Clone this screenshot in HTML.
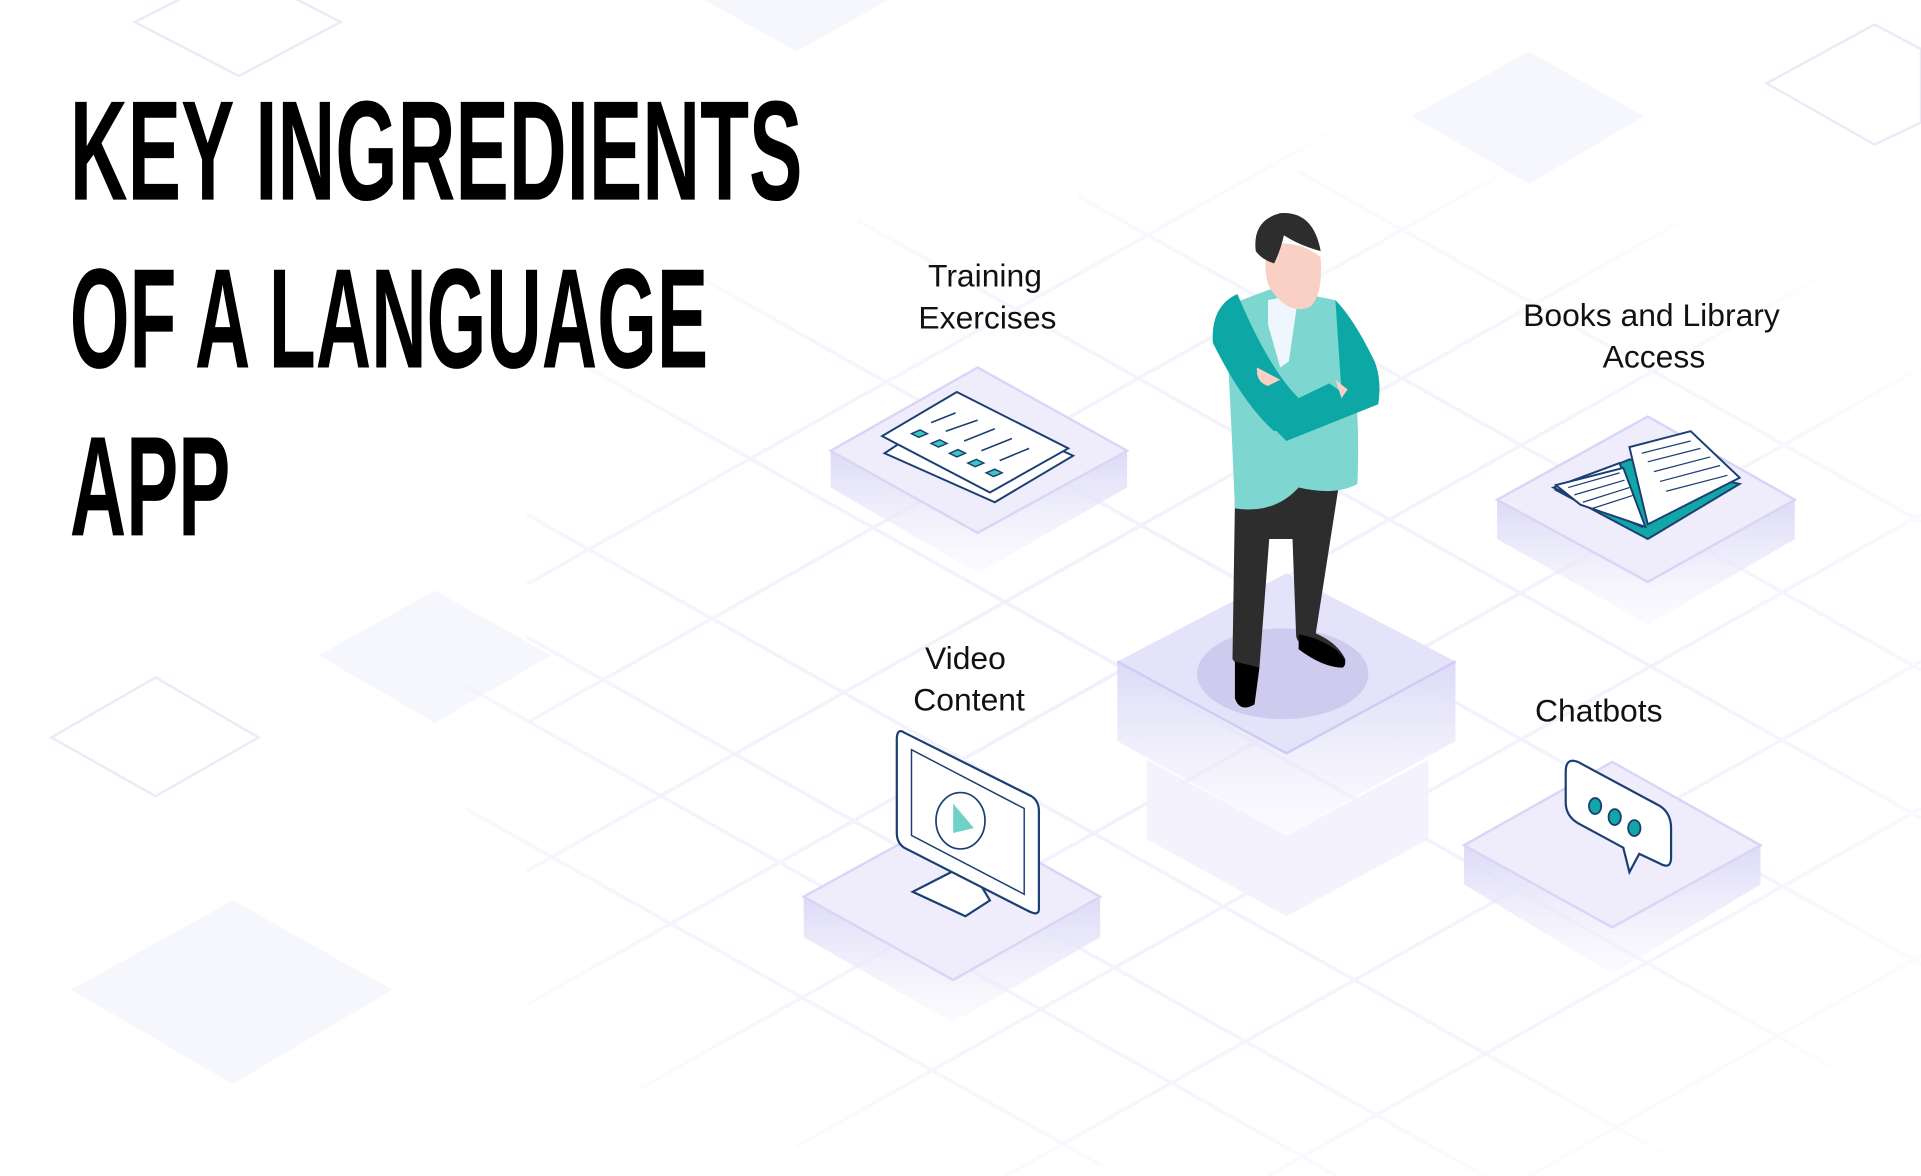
<!DOCTYPE html>
<html><head><meta charset="utf-8"><style>
html,body{margin:0;padding:0;background:#fff;overflow:hidden;width:1921px;height:1176px;}
svg{display:block;}
</style></head><body>
<svg width="1921" height="1176" viewBox="0 0 1568 960" preserveAspectRatio="none" xmlns="http://www.w3.org/2000/svg">
<defs>
<radialGradient id="fade" cx="0.62" cy="0.58" r="0.5">
<stop offset="0" stop-color="#fff" stop-opacity="1"/>
<stop offset="0.7" stop-color="#fff" stop-opacity="0.6"/>
<stop offset="1" stop-color="#fff" stop-opacity="0"/>
</radialGradient>
<mask id="m"><rect width="1568" height="960" fill="url(#fade)"/></mask>
<linearGradient id="side" x1="0" y1="0" x2="0" y2="1">
<stop offset="0" stop-color="#dcdaf7"/><stop offset="1" stop-color="#f3f2fd" stop-opacity="0.3"/>
</linearGradient>
</defs>
<rect width="1568" height="960" fill="#fff"/>
<path d="M110 18 L195 -25 L278 18 L195 62 Z" fill="none" stroke="#ebebf8" stroke-width="2"/>
<path d="M42 602 L127 553 L211 602 L127 650 Z" fill="none" stroke="#ebebf8" stroke-width="2"/>
<path d="M1442 68 L1530 20 L1568 40 L1568 100 L1530 118 Z" fill="none" stroke="#ebebf8" stroke-width="2"/>
<path d="M260 535 L355 482 L450 535 L355 590 Z" fill="#f6f6fd"/>
<path d="M58 808 L190 735 L320 808 L190 885 Z" fill="#f6f6fd"/>
<path d="M1152 95 L1248 42 L1342 95 L1248 150 Z" fill="#f6f6fd"/>
<path d="M575 0 L650 42 L725 0 Z" fill="#f6f6fd"/>
<g mask="url(#m)" stroke="#f0effc" stroke-width="3" fill="none">
<path d="M430 420 L1568 1060 M430 520 L1400 1066 M480 300 L1568 912 M560 220 L1568 787 M700 180 L1568 668 M880 160 L1568 547 M1060 140 L1568 426 M380 560 L1100 965 M380 660 L900 952"/>
<path d="M1568 180 L430 820 M1568 300 L520 890 M1568 420 L650 936 M1568 540 L780 983 M1568 660 L900 1036 M1480 120 L430 711 M1300 100 L430 590 M1100 100 L430 477 M1568 780 L1000 1100"/>
</g>
<path d="M912 540 L912 605 L1050 682 L1188 605 L1188 540 L1050 615 Z" fill="url(#side)"/>
<path d="M936 620 L936 685 L1050 748 L1166 685 L1166 620 L1050 682 Z" fill="#f1f0fc" opacity="0.8"/>
<path d="M912 540 L1050 468 L1188 540 L1050 615 Z" fill="#e5e3fa"/>
<path d="M912 540 L1050 615 L1188 540" fill="none" stroke="#cfcbf3" stroke-width="2"/>
<ellipse cx="1047" cy="550" rx="70" ry="37" fill="#cfcbef"/>
<g>
<path d="M678 368 L678 398 L798 468 L920 398 L920 368 L798 435 Z" fill="url(#side)"/>
<path d="M678 368 L798 300 L920 368 L798 435 Z" fill="#efedfc" stroke="#d9d5f6" stroke-width="2"/>
<path d="M1222 408 L1222 440 L1345 510 L1465 440 L1465 408 L1345 475 Z" fill="url(#side)"/>
<path d="M1222 408 L1345 340 L1465 408 L1345 475 Z" fill="#efedfc" stroke="#d9d5f6" stroke-width="2"/>
<path d="M656 732 L656 765 L778 835 L898 765 L898 732 L778 800 Z" fill="url(#side)"/>
<path d="M656 732 L778 665 L898 732 L778 800 Z" fill="#efedfc" stroke="#d9d5f6" stroke-width="2"/>
<path d="M1195 690 L1195 722 L1316 795 L1437 722 L1437 690 L1316 757 Z" fill="url(#side)"/>
<path d="M1195 690 L1316 622 L1437 690 L1316 757 Z" fill="#efedfc" stroke="#d9d5f6" stroke-width="2"/>
</g>
<g stroke="#1b3f73" stroke-width="1.6" fill="#fff">
<path d="M722 370 L783 330 L876 372 L812 410 Z"/>
<path d="M720 356 L781 320 L872 366 L808 402 Z"/>
<g stroke="#1b3f73" stroke-width="1.3">
<path d="M760 345 L780 337 M772 352 L798 343 M787 360 L812 350 M801 368 L826 358 M816 376 L840 366"/>
</g>
<g fill="#3cc6c0" stroke-width="1.2">
<path d="M744 354 l7 -3 l6 3 l-7 3z M760 362 l7 -3 l6 3 l-7 3z M775 370 l7 -3 l6 3 l-7 3z M790 378 l7 -3 l6 3 l-7 3z M805 386 l7 -3 l6 3 l-7 3z"/>
</g>
</g>
<g stroke="#1b3f73" stroke-width="1.6">
<path d="M1270 400 L1330 375 L1420 395 L1345 440 Z" fill="#12a6a6"/>
<path d="M1268 398 L1322 378 L1340 430 Z M1330 365 L1380 352 L1420 390 L1345 428 Z" fill="#fff"/>
<path d="M1270 396 L1325 382 L1343 430 L1290 412 Z" fill="#fff"/>
<g stroke-width="1"><path d="M1280 398 L1322 386 M1285 404 L1326 392 M1292 410 L1330 398 M1300 415 L1334 404 M1340 370 L1380 360 M1345 377 L1388 366 M1350 385 L1396 373 M1355 393 L1404 380 M1360 401 L1410 388"/></g>
</g>
<g stroke="#1b3f73" stroke-width="1.8">
<path d="M745 728 L790 705 L808 735 L788 748 Z" fill="#fff"/>
<path d="M738 598 L842 650 Q848 654 848 662 L848 742 Q848 748 840 744 L738 692 Q732 688 732 680 L732 604 Q732 594 738 598 Z" fill="#fff"/>
<path d="M744 612 L836 660 L836 730 L744 682 Z" fill="#fff" stroke-width="1.2"/>
<ellipse cx="784" cy="670" rx="20" ry="23" fill="#fff" stroke-width="1.4"/>
<path d="M778 656 L795 676 L778 680 Z" fill="#6fd2c8" stroke="none"/>
</g>
<g stroke="#1b3f73" stroke-width="1.8">
<path d="M1288 622 L1355 658 Q1364 664 1364 676 L1364 700 Q1364 710 1355 705 L1338 697 L1330 712 L1325 692 L1288 672 Q1278 666 1278 655 L1278 630 Q1278 618 1288 622 Z" fill="#fff"/>
<g fill="#12a6a6" stroke-width="1.5"><ellipse cx="1302" cy="658" rx="5" ry="6.5"/><ellipse cx="1318" cy="667" rx="5" ry="6.5"/><ellipse cx="1334" cy="676" rx="5" ry="6.5"/></g>
</g>
<g>
<path d="M1008 410 L1006 538 Q1012 548 1028 545 L1036 440 L1055 440 L1058 520 Q1060 528 1080 535 Q1100 545 1098 538 Q1092 525 1074 517 L1093 395 L1010 400 Z" fill="#2d2d2d"/>
<path d="M1008 540 L1008 570 Q1012 582 1024 575 L1028 545 Z" fill="#000"/>
<path d="M1060 518 Q1075 520 1090 530 Q1102 540 1096 545 Q1080 545 1060 530 Z" fill="#000"/>
<path d="M1000 250 L1040 235 L1090 245 Q1112 300 1108 395 Q1090 405 1060 398 Q1040 420 1008 415 Q1005 340 1000 250 Z" fill="#7dd6d0"/>
<path d="M1035 245 L1060 240 L1052 295 L1045 300 L1035 265 Z" fill="#eef6fe"/>
<path d="M990 280 Q988 250 1010 240 Q1035 300 1060 325 L1085 313 L1098 322 Q1080 340 1040 352 Q1015 330 990 280 Z" fill="#0da8a5"/>
<path d="M1090 245 Q1105 260 1122 295 Q1128 310 1125 330 Q1100 340 1050 360 L1040 350 L1095 320 Z" fill="#0da8a5"/>
<path d="M1026 300 L1045 310 L1035 315 Q1025 312 1026 300 Z M1090 310 L1100 318 L1095 325 Z" fill="#f8d0c4"/>
<path d="M1034 200 Q1030 230 1040 240 Q1055 258 1070 250 Q1080 240 1078 210 Q1060 195 1034 200 Z" fill="#f8d0c4"/>
<path d="M1025 205 Q1022 180 1045 174 Q1072 172 1078 205 Q1060 200 1048 192 Q1045 205 1040 215 Q1030 212 1025 205 Z" fill="#2d2d2d"/>
</g>
<g font-family="'Liberation Sans',sans-serif" font-weight="bold" font-size="116" fill="#000">
<text x="57" y="163" textLength="598" lengthAdjust="spacingAndGlyphs">KEY INGREDIENTS</text>
<text x="57" y="300" textLength="521" lengthAdjust="spacingAndGlyphs">OF A LANGUAGE</text>
<text x="57" y="437" textLength="131" lengthAdjust="spacingAndGlyphs">APP</text>
</g>
<g font-family="'Liberation Sans',sans-serif" font-size="26" fill="#111" text-anchor="middle">
<text x="804" y="234">Training</text>
<text x="806" y="268">Exercises</text>
<text x="1348" y="266">Books and Library</text>
<text x="1350" y="300">Access</text>
<text x="788" y="546">Video</text>
<text x="791" y="580">Content</text>
<text x="1305" y="589">Chatbots</text>
</g>
</svg>
</body></html>
